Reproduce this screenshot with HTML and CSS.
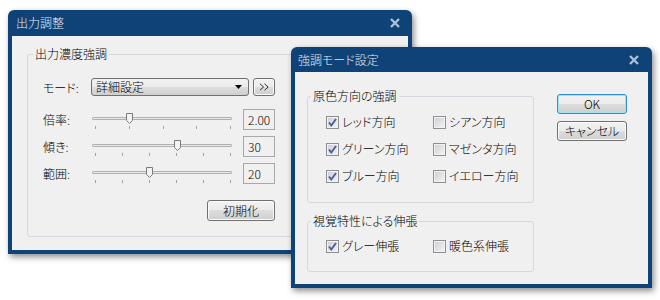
FILE: index.html
```html
<!DOCTYPE html>
<html lang="ja">
    <head>
        <meta charset="UTF-8" />
        <title>出力調整</title>
        <link rel="stylesheet" href="styles.css">
    </head>
    <body>
        <div class="desk">
            <section class="win win-main">
                <header class="titlebar">
                    <span>出力調整</span>
                    <svg class="close" viewBox="0 0 10 10"><path d="M1 1 L9 9 M9 1 L1 9" /></svg>
                </header>
                <div class="client">
                    <fieldset class="group group-main">
                        <legend>出力濃度強調</legend>
                        <div class="panel">
                            <div class="mode-row">
                                <span class="lbl">モード:</span>
                                <div class="select">
                                    <span>詳細設定</span>
                                    <svg class="arrow" viewBox="0 0 7 4"><polygon points="0,0 7,0 3.5,4" /></svg>
                                </div>
                                <button class="btn btn-more"><svg viewBox="0 0 12 8"><path d="M1 0.5 L5 4 L1 7.5 M6 0.5 L10 4 L6 7.5" /></svg></button>
                            </div>

                            <div class="slider-row first">
                                <span class="lbl">倍率:</span>
                                <div class="slider">
                                    <div class="track"></div>
                                    <div class="scale">
                                        <i></i><i></i><i></i><i></i><i></i>
                                        <svg class="thumb" style="left: 25%" viewBox="0 0 7 11"><polygon points="0.5,0.5 6.5,0.5 6.5,7.5 3.5,10.5 0.5,7.5" /></svg>
                                    </div>
                                </div>
                                <div class="value">2.00</div>
                            </div>
                            <div class="slider-row">
                                <span class="lbl">傾き:</span>
                                <div class="slider">
                                    <div class="track"></div>
                                    <div class="scale">
                                        <i></i><i></i><i></i><i></i><i></i><i></i>
                                        <svg class="thumb" style="left: 60%" viewBox="0 0 7 11"><polygon points="0.5,0.5 6.5,0.5 6.5,7.5 3.5,10.5 0.5,7.5" /></svg>
                                    </div>
                                </div>
                                <div class="value">30</div>
                            </div>
                            <div class="slider-row">
                                <span class="lbl">範囲:</span>
                                <div class="slider">
                                    <div class="track"></div>
                                    <div class="scale">
                                        <i></i><i></i><i></i><i></i><i></i><i></i>
                                        <svg class="thumb" style="left: 40%" viewBox="0 0 7 11"><polygon points="0.5,0.5 6.5,0.5 6.5,7.5 3.5,10.5 0.5,7.5" /></svg>
                                    </div>
                                </div>
                                <div class="value">20</div>
                            </div>

                            <div class="actions">
                                <button class="btn btn-reset">初期化</button>
                            </div>
                        </div>
                    </fieldset>
                </div>
            </section>

            <section class="win win-dialog">
                <header class="titlebar">
                    <span>強調モード設定</span>
                    <svg class="close" viewBox="0 0 10 10"><path d="M1 1 L9 9 M9 1 L1 9" /></svg>
                </header>
                <div class="client dialog-client">
                    <div class="groups">
                        <fieldset class="group group-primary">
                            <legend>原色方向の強調</legend>
                            <div class="checks">
                                <label class="check"><span class="cb on"><svg viewBox="0 0 11 11"><path d="M2 5.5 L4.3 8.5 L9 2" /></svg></span>レッド方向</label>
                                <label class="check"><span class="cb"></span>シアン方向</label>
                                <label class="check"><span class="cb on"><svg viewBox="0 0 11 11"><path d="M2 5.5 L4.3 8.5 L9 2" /></svg></span>グリーン方向</label>
                                <label class="check"><span class="cb"></span>マゼンタ方向</label>
                                <label class="check"><span class="cb on"><svg viewBox="0 0 11 11"><path d="M2 5.5 L4.3 8.5 L9 2" /></svg></span>ブルー方向</label>
                                <label class="check"><span class="cb"></span>イエロー方向</label>
                            </div>
                        </fieldset>
                        <fieldset class="group group-visual">
                            <legend>視覚特性による伸張</legend>
                            <div class="checks">
                                <label class="check"><span class="cb on"><svg viewBox="0 0 11 11"><path d="M2 5.5 L4.3 8.5 L9 2" /></svg></span>グレー伸張</label>
                                <label class="check"><span class="cb"></span>暖色系伸張</label>
                            </div>
                        </fieldset>
                    </div>
                    <div class="buttons">
                        <button class="btn btn-default">OK</button>
                        <button class="btn">キャンセル</button>
                    </div>
                </div>
            </section>
        </div>
    </body>
</html>
```

FILE: styles.css
```css
* {
    box-sizing: border-box;
    margin: 0;
}

body {
    margin: 0;
    background: #fff;
    color: #000;
    font-family: "Noto Sans CJK JP", "Noto Sans", sans-serif;
    font-size: 12px;
    font-weight: 300;
    font-feature-settings: "palt";
}

.desk {
    position: relative;
    width: 660px;
    height: 300px;
    overflow: hidden;
}

/* windows */
.win {
    position: absolute;
    display: flex;
    flex-direction: column;
    padding: 0 4px 4px;
    background: #0f4277;
    border-radius: 6px 6px 0 0;
    box-shadow: 2px 3px 6px rgba(0, 0, 0, 0.45);
}

.win-main {
    left: 8px;
    top: 10px;
    width: 404px;
    height: 244px;
}

.win-dialog {
    left: 291px;
    top: 47px;
    width: 361px;
    height: 241px;
}

.titlebar {
    display: flex;
    align-items: center;
    justify-content: space-between;
    height: 26px;
    padding: 0 8px 0 4px;
    color: #e4ebf2;
    line-height: 16px;
}

.win-dialog .titlebar {
    height: 25px;
    padding: 0 9px 0 3px;
}

.close {
    width: 10px;
    height: 10px;
    fill: none;
    stroke: #a9c0d8;
    stroke-width: 2.4;
}

.client {
    flex: 1;
    background: #f0f0f0;
}

/* group boxes */
.group {
    min-width: 0;
    padding: 0;
    border: 1px solid #d3d9df;
    border-radius: 3px;
}

.group legend {
    padding: 0 2px;
    line-height: 16px;
}

.group-main {
    margin: 10px 15px 0;
    padding: 0 0 15px 15px;
}

.group-main legend {
    margin-left: -10px;
}

.panel {
    width: 232px;
}

.lbl {
    flex: none;
    width: 48px;
}

.mode-row {
    display: flex;
    align-items: center;
    height: 18px;
    margin-top: 16px;
}

.select {
    display: flex;
    align-items: center;
    justify-content: space-between;
    width: 158px;
    height: 18px;
    padding: 0 6px 0 4px;
    border: 1px solid #707070;
    border-radius: 3px;
    background: linear-gradient(#f2f2f2 0%, #ebebeb 50%, #dddddd 50%, #cfcfcf 100%);
    line-height: 16px;
}

.arrow {
    width: 7px;
    height: 4px;
    fill: #000;
}

.slider-row {
    display: flex;
    align-items: flex-start;
    height: 21px;
    margin-top: 6px;
}

.slider-row .lbl {
    width: 49px;
    line-height: 21px;
}

.slider-row.first {
    margin-top: 13px;
}

.slider {
    width: 140px;
}

.track {
    height: 3px;
    margin-top: 8px;
    border: 1px solid #b0b0b0;
    border-radius: 1px;
    background: #e7e9ea;
}

.scale {
    position: relative;
    display: flex;
    justify-content: space-between;
    height: 3px;
    margin: 6px 1px 0 3px;
}

.scale i {
    width: 1px;
    height: 3px;
    background: #a3a3a3;
}

.thumb {
    position: absolute;
    top: -13px;
    width: 7px;
    height: 11px;
    margin-left: -3px;
    fill: #f3f3f3;
    stroke: #7a7a7a;
    stroke-width: 1;
}

.value {
    width: 32px;
    height: 21px;
    margin-left: 11px;
    padding-left: 4px;
    border: 1px solid #a8a8a8;
    line-height: 19px;
}

.actions {
    display: flex;
    justify-content: flex-end;
    margin-top: 16px;
}

/* buttons */
.btn {
    height: 20px;
    padding: 0;
    border: 1px solid #707070;
    border-radius: 3px;
    background: linear-gradient(#f2f2f2 0%, #ebebeb 50%, #dddddd 50%, #cfcfcf 100%);
    box-shadow: inset 0 0 0 1px #fbfbfb;
    color: #000;
    font: inherit;
    line-height: 16px;
}

.btn-more {
    display: flex;
    align-items: center;
    justify-content: center;
    width: 22px;
    height: 18px;
    margin-left: 4px;
}

.btn-more svg {
    width: 11px;
    height: 8px;
    fill: none;
    stroke: #222;
    stroke-width: 1;
}

.btn-reset {
    width: 68px;
    height: 21px;
}

.btn-default {
    border-color: #2f8fd0;
    box-shadow: inset 0 0 0 1px #a2e2f8;
}

/* dialog */
.dialog-client {
    display: flex;
}

.groups {
    padding-left: 12px;
}

.group-primary,
.group-visual {
    width: 227px;
    padding: 0 0 18px 18px;
}

.group-primary {
    margin-top: 16px;
}

.group-visual {
    margin-top: 10px;
    padding-bottom: 17px;
}

.group-primary legend,
.group-visual legend {
    margin-left: -15px;
}

.checks {
    display: grid;
    grid-template-columns: 107px auto;
    row-gap: 11px;
    margin-top: 10px;
}

.group-visual .checks {
    margin-top: 9px;
}

.check {
    display: flex;
    align-items: center;
    gap: 3px;
    height: 16px;
    line-height: 16px;
}

.cb {
    flex: none;
    width: 13px;
    height: 13px;
    border: 1px solid #8e8f8f;
    background: linear-gradient(135deg, #c9cdd3, #f5f5f5);
    box-shadow: inset 0 0 0 1px #f2f2f2;
}

.cb svg {
    display: block;
    width: 11px;
    height: 11px;
    fill: none;
    stroke: #4b5c98;
    stroke-width: 1.9;
}

.buttons {
    display: flex;
    flex-direction: column;
    gap: 7px;
    margin-left: 23px;
    padding-top: 22px;
}

.buttons .btn {
    width: 70px;
}
```
